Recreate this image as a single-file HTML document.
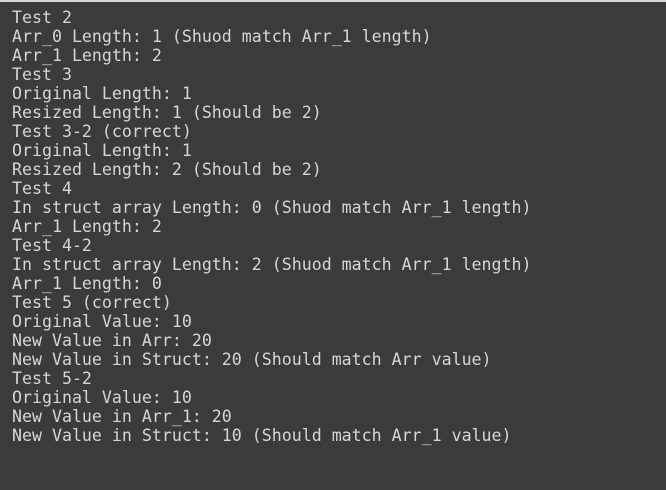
<!DOCTYPE html>
<html><head><style>
html,body{margin:0;padding:0;}
body{width:666px;height:490px;background:#3b3b3b;border-top:2px solid #d9d9d9;box-sizing:border-box;overflow:hidden;}
pre{margin:0;padding:6px 0 0 12px;font-family:"DejaVu Sans Mono","Liberation Mono",monospace;font-size:16.6px;line-height:19px;color:#d6d6d6;letter-spacing:0px;}
</style></head><body><pre>Test 2
Arr_0 Length: 1 (Shuod match Arr_1 length)
Arr_1 Length: 2
Test 3
Original Length: 1
Resized Length: 1 (Should be 2)
Test 3-2 (correct)
Original Length: 1
Resized Length: 2 (Should be 2)
Test 4
In struct array Length: 0 (Shuod match Arr_1 length)
Arr_1 Length: 2
Test 4-2
In struct array Length: 2 (Shuod match Arr_1 length)
Arr_1 Length: 0
Test 5 (correct)
Original Value: 10
New Value in Arr: 20
New Value in Struct: 20 (Should match Arr value)
Test 5-2
Original Value: 10
New Value in Arr_1: 20
New Value in Struct: 10 (Should match Arr_1 value)</pre></body></html>
